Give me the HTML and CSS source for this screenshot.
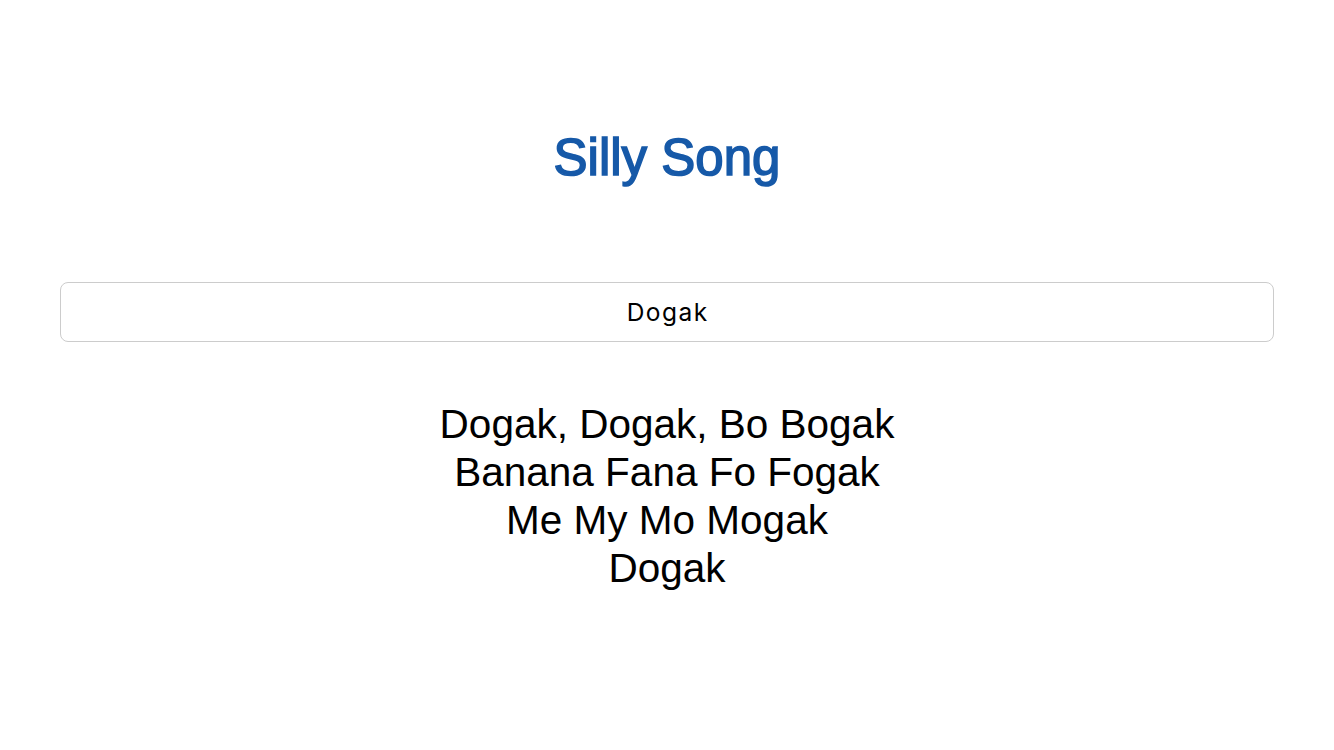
FILE: index.html
```html
<!DOCTYPE html>
<html lang="en">
<head>
<meta charset="utf-8">
<title>Silly Song</title>
<link rel="stylesheet" href="styles.css">
</head>
<body>
<main class="page">
  <h1 class="title">Silly Song</h1>
  <div class="field"><input class="name-input" type="text" value="Dogak"></div>
  <div class="lyrics">
    <p class="line">Dogak, Dogak, Bo Bogak</p>
    <p class="line">Banana Fana Fo Fogak</p>
    <p class="line">Me My Mo Mogak</p>
    <p class="line">Dogak</p>
  </div>
</main>
</body>
</html>
```
FILE: styles.css
```css
html, body {
  margin: 0;
  padding: 0;
  background: #ffffff;
}
.page {
  display: flex;
  flex-direction: column;
  align-items: stretch;
  padding: 132px 60px 0 60px;
  font-family: "Liberation Sans", Arial, sans-serif;
}
.title {
  margin: 0;
  font-size: 51px;
  line-height: 51px;
  font-weight: normal;
  color: #1659a8;
  -webkit-text-stroke: 1.6px #1659a8;
  text-align: center;
}
.field {
  margin-top: 99px;
}
.name-input {
  display: block;
  box-sizing: border-box;
  width: 100%;
  height: 60px;
  margin: 0;
  padding: 0 12px;
  border: 1px solid #cccccc;
  border-radius: 8px;
  background: #ffffff;
  font-family: "Inter", "Open Sans", sans-serif;
  font-size: 24.5px;
  letter-spacing: 1.5px;
  text-indent: 1.5px;
  color: #000000;
  text-align: center;
  outline: none;
}
.lyrics {
  margin-top: 58px;
  text-align: center;
}
.line {
  margin: 0;
  font-size: 40.5px;
  line-height: 48px;
  color: #000000;
}
```
